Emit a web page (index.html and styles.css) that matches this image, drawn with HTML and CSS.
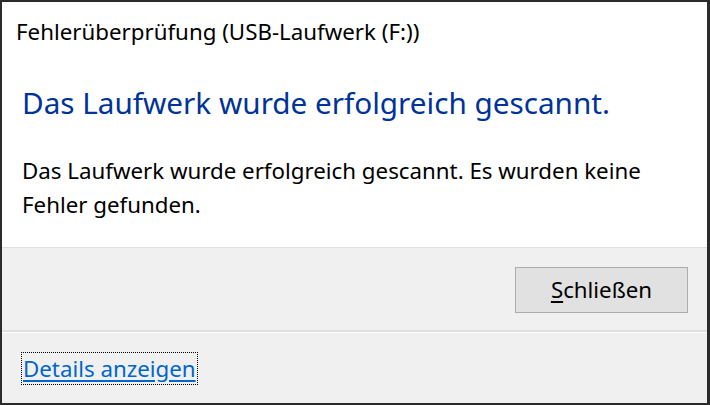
FILE: index.html
```html
<!DOCTYPE html>
<html lang="de">
<head>
<meta charset="utf-8">
<title>Fehlerüberprüfung</title>
<link rel="stylesheet" href="styles.css">
</head>
<body>
<div class="window">
  <div class="top">
    <div class="title">Fehlerüberprüfung (USB-Laufwerk (F:))</div>
    <h1 class="main">Das Laufwerk wurde erfolgreich gescannt.</h1>
    <p class="text">Das Laufwerk wurde erfolgreich gescannt. Es wurden keine Fehler gefunden.</p>
  </div>
  <div class="buttons">
    <button class="btn"><span class="accel">S</span>chließen</button>
  </div>
  <div class="footer">
    <a class="link" href="#">Details anzeigen</a>
  </div>
</div>
</body>
</html>
```
FILE: styles.css
```css
html, body {
  margin: 0;
  padding: 0;
  background: #2b2b2b;
}
body {
  font-family: "Noto Sans", "Open Sans", sans-serif;
  color: #000;
}
.window {
  width: 710px;
  height: 405px;
  box-sizing: border-box;
  border-style: solid;
  border-color: #2b2b2b;
  border-width: 2px 3px 2px 2px;
  display: flex;
  flex-direction: column;
  background: #f0f0f0;
}
.top {
  height: 245px;
  background: #fff;
  border-bottom: 1px solid #dfdfdf;
  box-sizing: content-box;
}
.title {
  font-size: 22.3px;
  line-height: 30px;
  padding: 15px 0 0 14px;
  color: #000;
}
.main {
  margin: 36px 0 0 20px;
  font-size: 29.7px;
  line-height: 40px;
  font-weight: normal;
  color: #003399;
}
.text {
  margin: 31px 20px 0 20px;
  font-size: 22.3px;
  line-height: 34px;
}
.buttons {
  height: 82px;
  display: flex;
  align-items: center;
  justify-content: flex-end;
  padding-right: 19px;
  border-bottom: 2px solid #dfdfdf;
  box-shadow: 0 1px 0 #fff;
}
.btn {
  width: 173px;
  height: 46px;
  margin-top: 1px;
  border: 1px solid #adadad;
  background: #e1e1e1;
  font-family: inherit;
  font-size: 22.3px;
  color: #000;
  padding: 0;
}
.accel {
  text-decoration: underline;
  text-underline-offset: 3px;
}
.footer {
  flex: 1;
  margin-top: 1px;
  padding: 20px 0 0 20px;
}
.link {
  display: inline-block;
  font-size: 22.3px;
  line-height: 31px;
  color: #0066cc;
  text-decoration: underline;
  text-underline-offset: 3px;
  outline: 1px dotted #000;
  padding: 0 1px;
}
```
